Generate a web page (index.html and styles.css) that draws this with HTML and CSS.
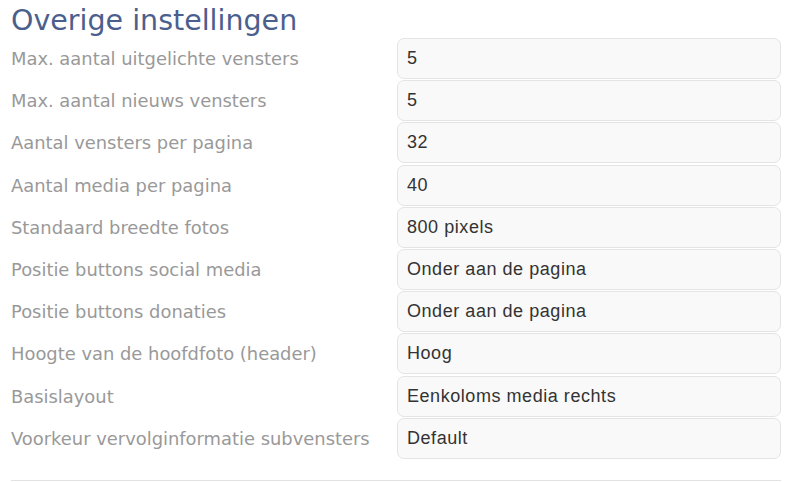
FILE: index.html
```html
<!DOCTYPE html>
<html lang="nl">
<head>
    <meta charset="UTF-8">
    <title>Overige instellingen</title>
    <link rel="stylesheet" href="styles.css">
</head>
<body>
    <div class="settings">
        <h2>Overige instellingen</h2>
        <div class="row"><span class="label">Max. aantal uitgelichte vensters</span><div class="field">5</div></div>
        <div class="row"><span class="label">Max. aantal nieuws vensters</span><div class="field">5</div></div>
        <div class="row"><span class="label">Aantal vensters per pagina</span><div class="field">32</div></div>
        <div class="row"><span class="label">Aantal media per pagina</span><div class="field">40</div></div>
        <div class="row"><span class="label">Standaard breedte fotos</span><div class="field">800 pixels</div></div>
        <div class="row"><span class="label">Positie buttons social media</span><div class="field">Onder aan de pagina</div></div>
        <div class="row"><span class="label">Positie buttons donaties</span><div class="field">Onder aan de pagina</div></div>
        <div class="row"><span class="label">Hoogte van de hoofdfoto (header)</span><div class="field">Hoog</div></div>
        <div class="row"><span class="label">Basislayout</span><div class="field">Eenkoloms media rechts</div></div>
        <div class="row"><span class="label">Voorkeur vervolginformatie subvensters</span><div class="field">Default</div></div>
        <hr class="divider">
    </div>
</body>
</html>
```

FILE: styles.css
```css
body {
    margin: 0;
    background-color: #fff;
    font-family: "DejaVu Sans", sans-serif;
}
.settings {
    padding: 0 19px 0 11px;
}
h2 {
    margin: 3px 0 0 0;
    font-weight: normal;
    font-size: 28.5px;
    line-height: 35px;
    color: #4b5f8e;
    height: 35px;
}
.row {
    display: grid;
    grid-template-columns: 386px 1fr;
    align-items: center;
    margin-bottom: 1.2px;
}
.label {
    font-size: 17.9px;
    color: #999;
}
.field {
    height: 39px;
    line-height: 39px;
    border: 1px solid #e4e4e4;
    border-radius: 7px;
    background-color: #f9f9f9;
    padding-left: 9px;
    font-family: "Liberation Sans", Arial, sans-serif;
    font-size: 18px;
    letter-spacing: 0.55px;
    color: #333;
}
.divider {
    border: none;
    border-top: 1px solid #e2e2e2;
    margin: 21px 0 0 0;
}
```
